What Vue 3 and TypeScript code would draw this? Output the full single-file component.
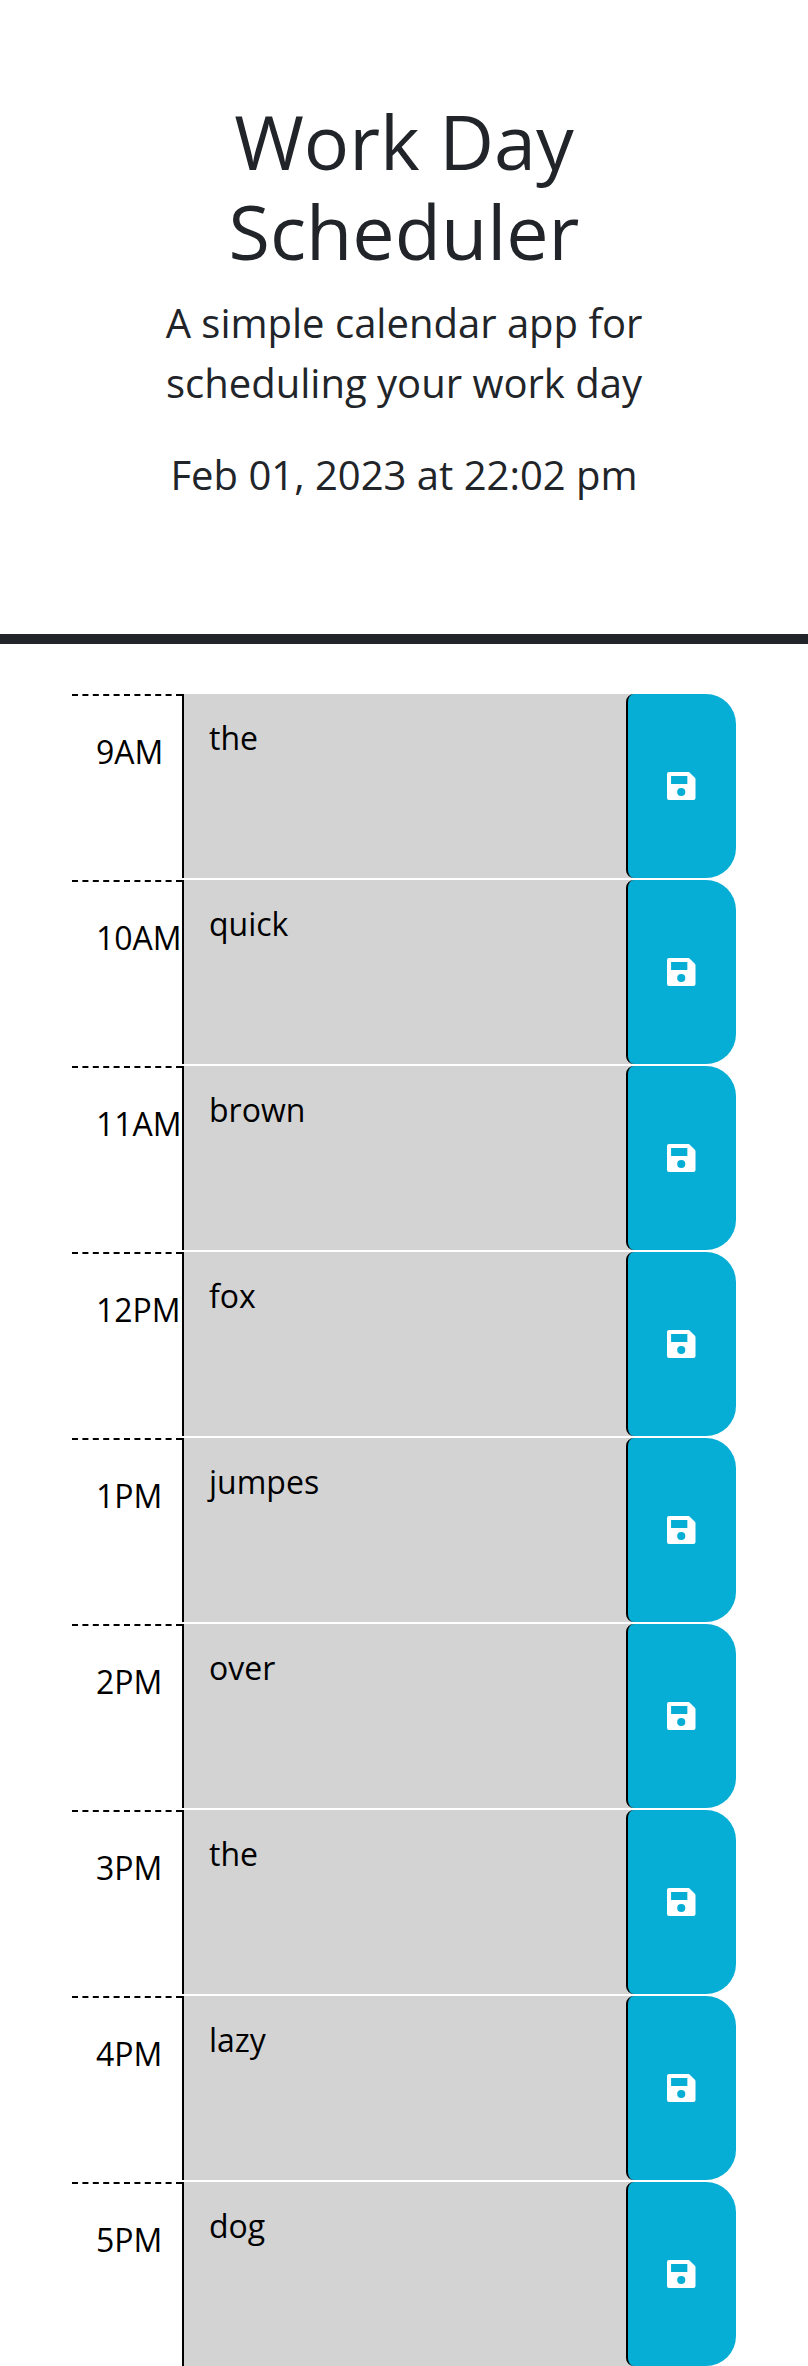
<script setup lang="ts">
import { ref } from 'vue'

interface TimeBlock {
  hour: string
  task: string
}

const currentDay = 'Feb 01, 2023 at 22:02 pm'

const blocks = ref<TimeBlock[]>([
  { hour: '9AM', task: 'the' },
  { hour: '10AM', task: 'quick' },
  { hour: '11AM', task: 'brown' },
  { hour: '12PM', task: 'fox' },
  { hour: '1PM', task: 'jumpes' },
  { hour: '2PM', task: 'over' },
  { hour: '3PM', task: 'the' },
  { hour: '4PM', task: 'lazy' },
  { hour: '5PM', task: 'dog' },
])
</script>

<template>
  <div class="page">
    <header class="hero">
      <h1 class="title">Work Day Scheduler</h1>
      <p class="lead">A simple calendar app for scheduling your work day</p>
      <p class="lead">{{ currentDay }}</p>
    </header>
    <main class="schedule">
      <section v-for="block in blocks" :key="block.hour" class="row">
        <div class="hour">{{ block.hour }}</div>
        <textarea v-model="block.task" class="task" spellcheck="false"></textarea>
        <div class="action">
          <button class="save" type="button" aria-label="Save">
            <svg class="icon" viewBox="0 0 28 28" preserveAspectRatio="none">
              <path
                fill="currentColor"
                fill-rule="evenodd"
                d="M2 0H21.6L27.4 5.8Q28 6.4 28 7.2V26Q28 28 26 28H2Q0 28 0 26V2Q0 0 2 0ZM4 4V12H20V4ZM14 16A4 4 0 1 0 14 24A4 4 0 1 0 14 16Z"
              />
            </svg>
          </button>
        </div>
      </section>
    </main>
  </div>
</template>

<style>
body {
  margin: 0;
  background: #fff;
}
</style>

<style scoped>
.page {
  box-sizing: border-box;
  height: 2366px;
  overflow: hidden;
  font-family: 'Open Sans', sans-serif;
  color: #212529;
}
.hero {
  box-sizing: border-box;
  height: 644px;
  padding: 96px 136px 0;
  border-bottom: 10px solid #212529;
  text-align: center;
}
.title {
  margin: 0 0 17px;
  font-size: 75.46px;
  font-weight: 400;
  line-height: 90px;
}
.lead {
  margin: 0 0 32px;
  font-size: 40px;
  font-weight: 400;
  line-height: 60px;
}
.schedule {
  display: flex;
  flex-direction: column;
  gap: 2px;
  padding: 50px 72px 0;
}
.row {
  display: grid;
  grid-template-columns: 110px 444px 110px;
  height: 184px;
  color: #000;
  font-size: 32px;
  font-weight: 400;
  line-height: 48px;
}
.hour {
  box-sizing: border-box;
  padding: 32px 0 0 24px;
  border-top: 2px dashed #000;
  white-space: nowrap;
}
.task {
  box-sizing: border-box;
  display: block;
  width: 100%;
  height: 184px;
  margin: 0;
  padding: 20px 24px 20px 25px;
  border: 0;
  border-left: 2px solid #000;
  border-radius: 0;
  outline: 0;
  background: #d3d3d3;
  color: #000;
  font: inherit;
  resize: none;
  overflow: hidden;
}
.action {
  height: 184px;
  background: linear-gradient(to right, #d3d3d3 8px, transparent 8px);
}
.save {
  display: flex;
  align-items: center;
  justify-content: center;
  box-sizing: border-box;
  width: 110px;
  height: 184px;
  margin: 0;
  padding: 0 1.5px 0 0;
  border: 0;
  border-left: 2px solid #000;
  border-radius: 8px 30px 30px 8px;
  background: #06aed5;
  color: #fff;
}
.icon {
  width: 28.5px;
  height: 28px;
}
</style>
